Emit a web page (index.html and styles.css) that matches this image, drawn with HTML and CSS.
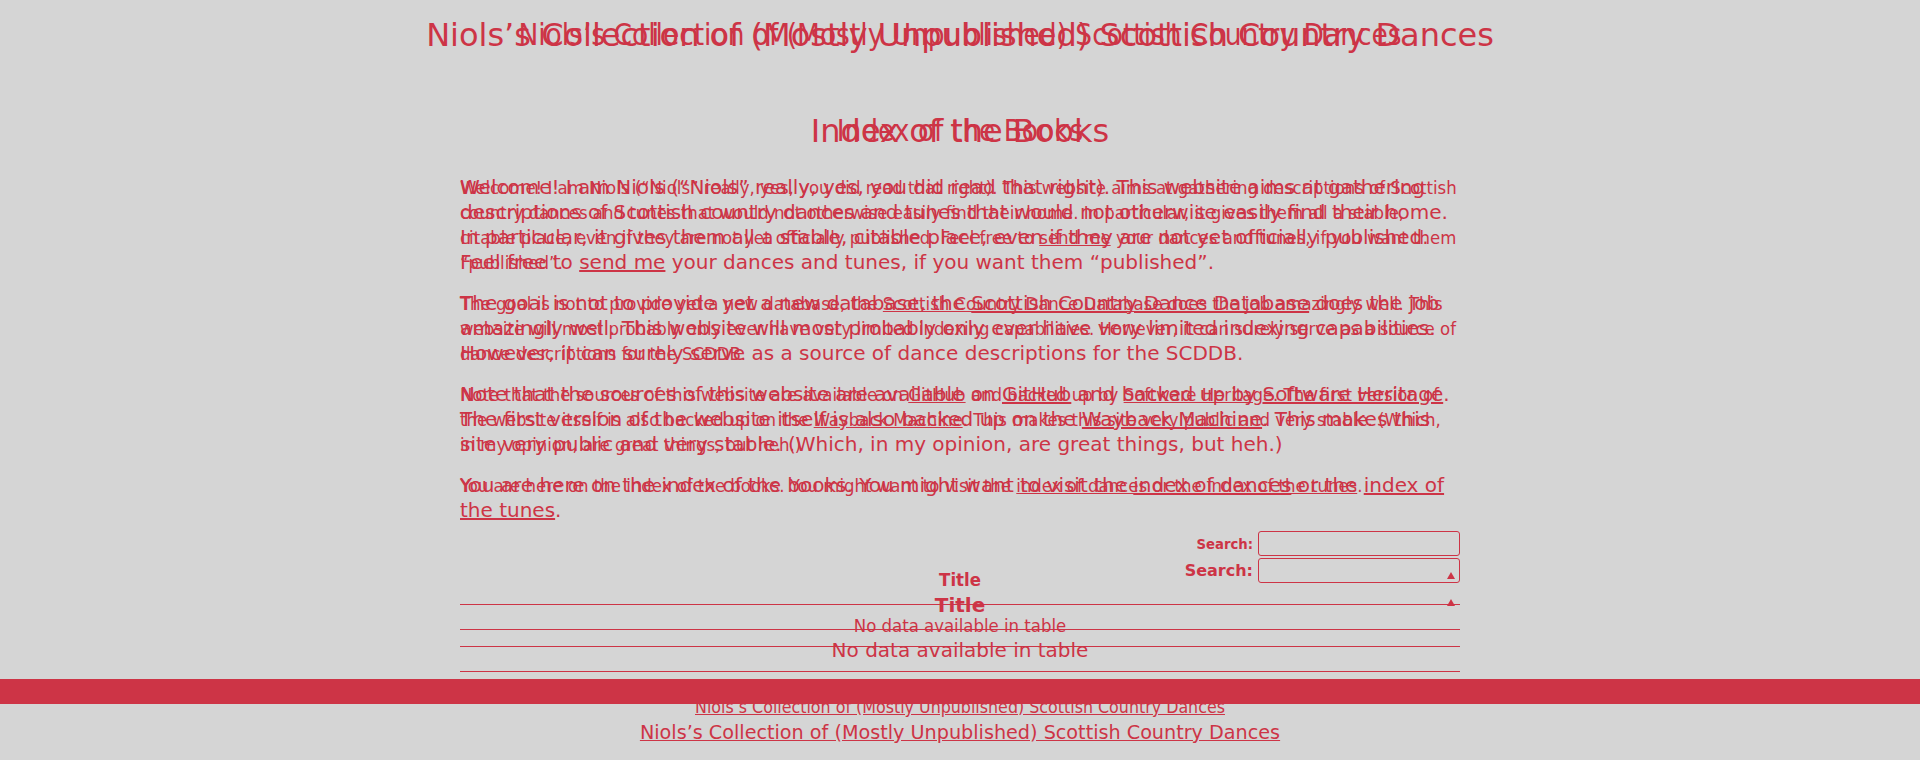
FILE: index.html
```html
<!DOCTYPE html>
<html lang="en">
<head>
<meta charset="utf-8">
<title>Niols’s Collection of (Mostly Unpublished) Scottish Country Dances</title>
<link rel="stylesheet" href="styles.css">
</head>
<body>
<div class="page">
  <div class="layer layer-a">
    <header class="site-header"><h1 class="site-title">Niols’s Collection of (Mostly Unpublished) Scottish Country Dances</h1></header>
    <main class="content">
      <h2 class="page-title">Index of the Books</h2>
      <p class="para">Welcome! I am Niols (“Niols” really, yes, you did read that right). This website aims at gathering descriptions of Scottish country dances and tunes that would not otherwise easily find their home. In particular, it gives them all a stable, citable place, even if they are not yet officially published. Feel free to <a href="#">send me</a> your dances and tunes, if you want them “published”.</p>
      <p class="para">The goal is not to provide yet a new database, the <a href="#">Scottish Country Dance Database</a> does the job amazingly well. This website will most probably only ever have very limited indexing capabilities. However, it can surely serve as a source of dance descriptions for the SCDDB.</p>
      <p class="para">Note that the sources of this website are available on <a href="#">GitHub</a> and backed up by <a href="#">Software Heritage</a>. The first version of the website itself is also backed up on the <a href="#">Wayback Machine</a>. This makes this site very public and very stable. (Which, in my opinion, are great things, but heh.)</p>
      <p class="para">You are here on the index of the books. You might want to visit the <a href="#">index of dances</a> or the <a href="#">index of the tunes</a>.</p>
      <div class="search-row"><label class="search-label">Search:</label><span class="search-box"></span></div>
      <table class="data-table">
        <thead><tr><th class="col-title">Title</th></tr></thead>
        <tbody><tr><td class="empty">No data available in table</td></tr></tbody>
      </table>
    </main>
    <footer class="site-footer"><a href="#">Niols’s Collection of (Mostly Unpublished) Scottish Country Dances</a></footer>
  </div>
  <div class="layer layer-b" aria-hidden="true">
    <header class="site-header"><h1 class="site-title">Niols’s Collection of (Mostly Unpublished) Scottish Country Dances</h1></header>
    <main class="content">
      <h2 class="page-title">Index of the Books</h2>
      <p class="para">Welcome! I am Niols (“Niols” really, yes, you did read that right). This website aims at gathering descriptions of Scottish country dances and tunes that would not otherwise easily find their home. In particular, it gives them all a stable, citable place, even if they are not yet officially published. Feel free to <a href="#">send me</a> your dances and tunes, if you want them “published”.</p>
      <p class="para">The goal is not to provide yet a new database, the <a href="#">Scottish Country Dance Database</a> does the job amazingly well. This website will most probably only ever have very limited indexing capabilities. However, it can surely serve as a source of dance descriptions for the SCDDB.</p>
      <p class="para">Note that the sources of this website are available on <a href="#">GitHub</a> and backed up by <a href="#">Software Heritage</a>. The first version of the website itself is also backed up on the <a href="#">Wayback Machine</a>. This makes this site very public and very stable. (Which, in my opinion, are great things, but heh.)</p>
      <p class="para">You are here on the index of the books. You might want to visit the <a href="#">index of dances</a> or the <a href="#">index of the tunes</a>.</p>
      <div class="search-row"><label class="search-label">Search:</label><span class="search-box"></span></div>
      <table class="data-table">
        <thead><tr><th class="col-title">Title</th></tr></thead>
        <tbody><tr><td class="empty">No data available in table</td></tr></tbody>
      </table>
    </main>
    <footer class="site-footer"><a href="#">Niols’s Collection of (Mostly Unpublished) Scottish Country Dances</a></footer>
  </div>
  <div class="footer-bar"></div>
</div>
</body>
</html>
```
FILE: styles.css
```css
html, body {
  margin: 0;
  padding: 0;
  background: #d5d5d5;
}
.page {
  position: relative;
  min-height: 760px;
  color: #cd3446;
}
.layer {
  font-family: "DejaVu Sans", sans-serif;
  font-size: 20px;
  line-height: 25px;
}
.layer-b {
  position: absolute;
  top: 0;
  left: 0;
  right: 0;
  font-family: "DejaVu Sans Condensed", "Liberation Sans", sans-serif;
  font-size: 18.4px;
}
.site-header {
  padding-top: 16px;
  text-align: center;
}
.site-title {
  margin: 0;
  font-size: 1.6em;
  font-weight: normal;
  line-height: 38px;
}
.content {
  width: 1000px;
  margin: 0 auto;
}
.page-title {
  margin: 58px 0 0;
  font-size: 1.6em;
  font-weight: normal;
  line-height: 38px;
  text-align: center;
}
.para {
  margin: 25px 0 0;
}
.para + .para {
  margin-top: 16px;
}
.para a, .site-footer a {
  color: inherit;
  text-decoration: underline;
}
.search-row {
  display: flex;
  justify-content: flex-end;
  align-items: center;
  gap: 5px;
  margin-top: 35px;
}
.layer-b .search-row {
  margin-top: 33px;
}
.search-label {
  font-size: 0.8em;
  font-weight: bold;
}
.search-box {
  box-sizing: border-box;
  width: 202px;
  height: 25px;
  border: 1px solid #cd3446;
  border-radius: 3px;
}
.data-table {
  width: 100%;
  border-collapse: collapse;
}
.col-title {
  position: relative;
  padding: 10px 18px 11px;
  font-weight: bold;
  text-align: center;
  border-bottom: 1px solid #cd3446;
}
.layer-b .col-title {
  padding-top: 11px;
  padding-bottom: 12px;
}
.col-title::after {
  content: "";
  position: absolute;
  right: 5px;
  top: 16px;
  border-left: 4px solid transparent;
  border-right: 4px solid transparent;
  border-bottom: 7px solid #cd3446;
}
.empty {
  padding: 8px 10px 8px;
  text-align: center;
  border-bottom: 1px solid #cd3446;
}
.site-footer {
  margin-top: 48px;
  text-align: center;
  font-size: 0.96em;
}
.footer-bar {
  position: absolute;
  top: 679px;
  left: 0;
  right: 0;
  height: 25px;
  background: #cd3446;
}
```
